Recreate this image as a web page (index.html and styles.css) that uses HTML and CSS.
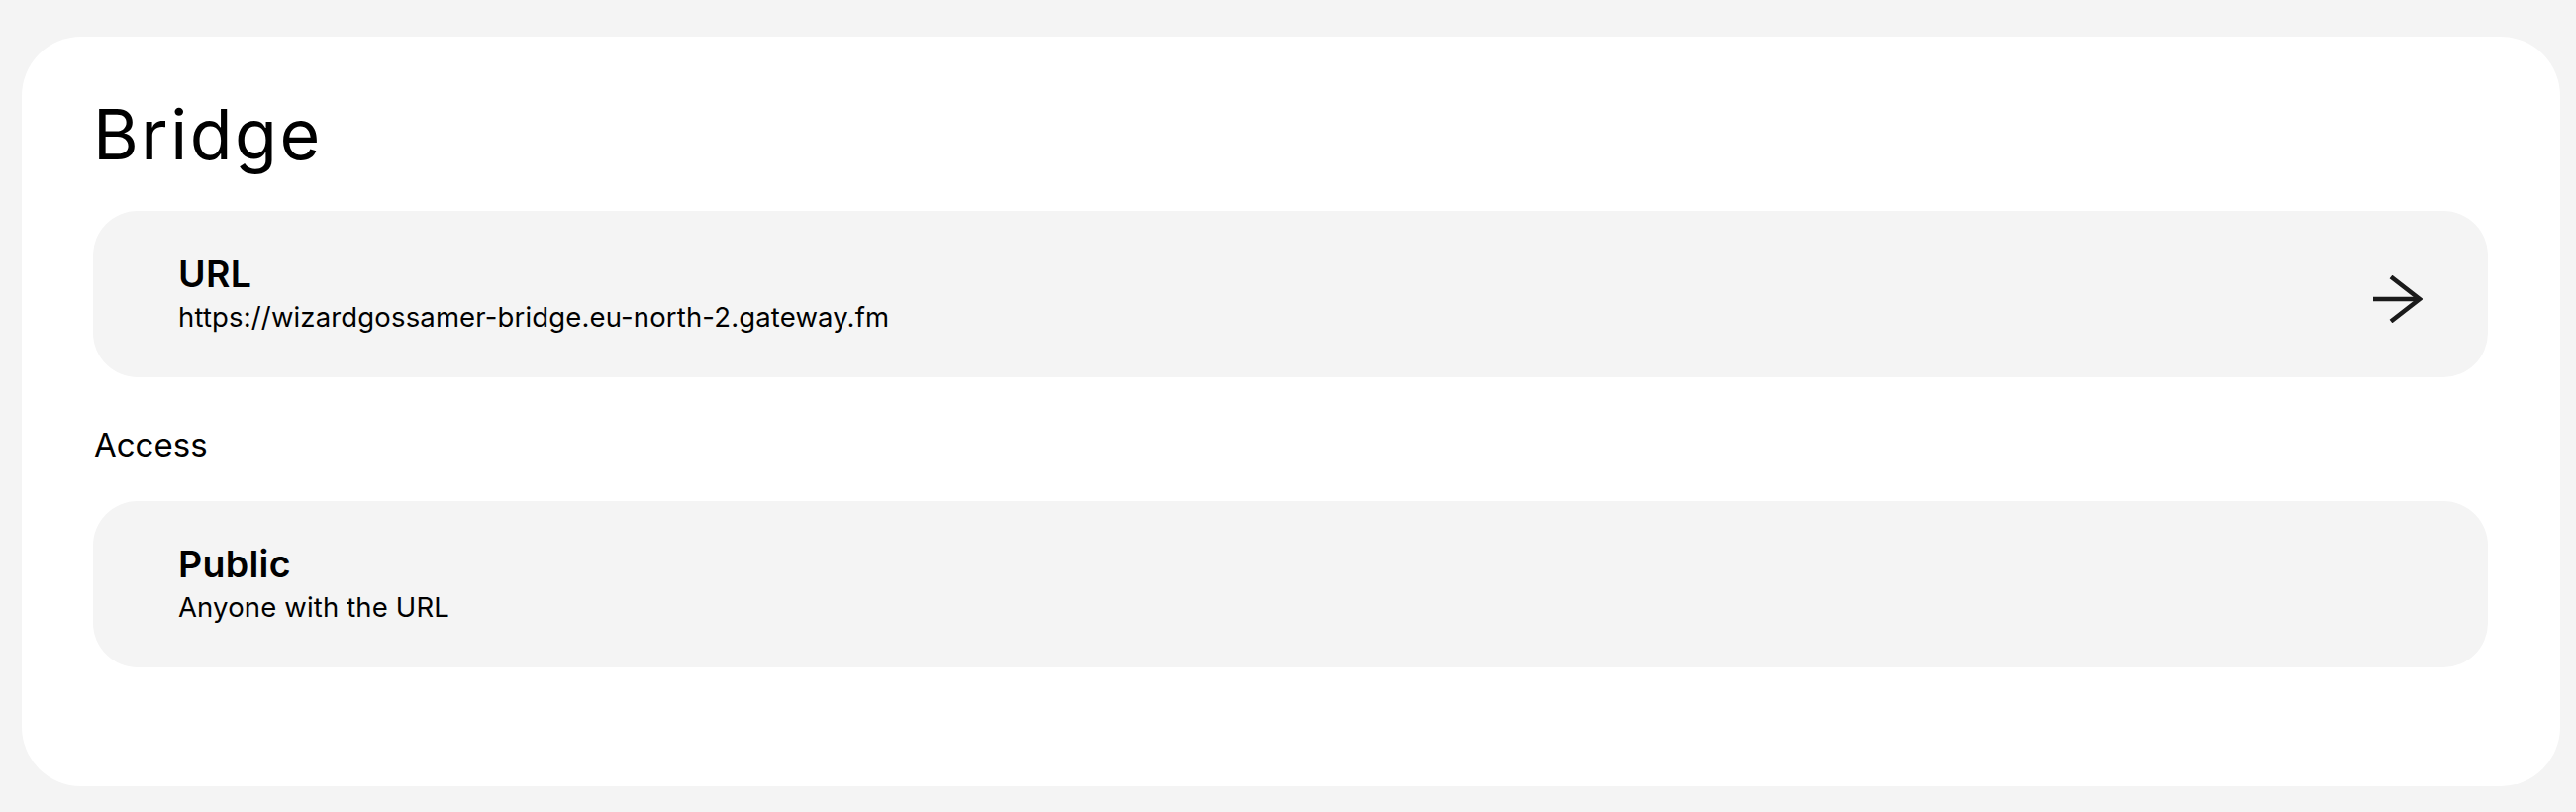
FILE: index.html
```html
<!DOCTYPE html>
<html lang="en">
<head>
<meta charset="utf-8">
<title>Bridge</title>
<link rel="stylesheet" href="styles.css">
</head>
<body>
  <main class="card">
    <h1 class="title">Bridge</h1>
    <a class="row" href="#">
      <div class="row-text">
        <div class="row-title">URL</div>
        <div class="row-sub">https://wizardgossamer-bridge.eu-north-2.gateway.fm</div>
      </div>
      <svg class="arrow" width="50" height="48" viewBox="0 0 50 48" aria-hidden="true">
        <path d="M0 24 H46" fill="none" stroke="#1a1a1a" stroke-width="4.5"/>
        <path d="M18 1.5 L47 24 L18 46.5" fill="none" stroke="#1a1a1a" stroke-width="4.5" stroke-linejoin="miter"/>
      </svg>
    </a>
    <h2 class="section">Access</h2>
    <div class="row">
      <div class="row-text">
        <div class="row-title">Public</div>
        <div class="row-sub">Anyone with the URL</div>
      </div>
    </div>
  </main>
</body>
</html>
```
FILE: styles.css
```css
html, body {
  margin: 0;
  background: #f4f4f4;
}
body {
  padding: 37px 16px 27px 22px;
  font-family: Inter, "Noto Sans", "Liberation Sans", sans-serif;
  color: #000;
}
.card {
  background: #fff;
  border-radius: 60px;
  padding: 57px 73px 120px 72px;
}
.title {
  margin: 0 0 35px;
  font-size: 70px;
  line-height: 84px;
  font-weight: 400;
  letter-spacing: 2.5px;
}
.row {
  display: flex;
  align-items: center;
  justify-content: space-between;
  background: #f4f4f4;
  border-radius: 45px;
  padding: 41px 66px 45px 86px;
  color: inherit;
  text-decoration: none;
}
.row-title {
  font-size: 37.5px;
  line-height: 45px;
  font-weight: 600;
  letter-spacing: 0.3px;
}
.row-sub {
  margin-top: 5px;
  font-size: 27.5px;
  line-height: 32px;
  font-weight: 400;
  letter-spacing: 0.15px;
}
.arrow {
  display: block;
  margin-top: 14px;
  flex: none;
}
.section {
  margin: 48px 0 36px 1px;
  font-size: 33px;
  line-height: 41px;
  font-weight: 400;
}
```
